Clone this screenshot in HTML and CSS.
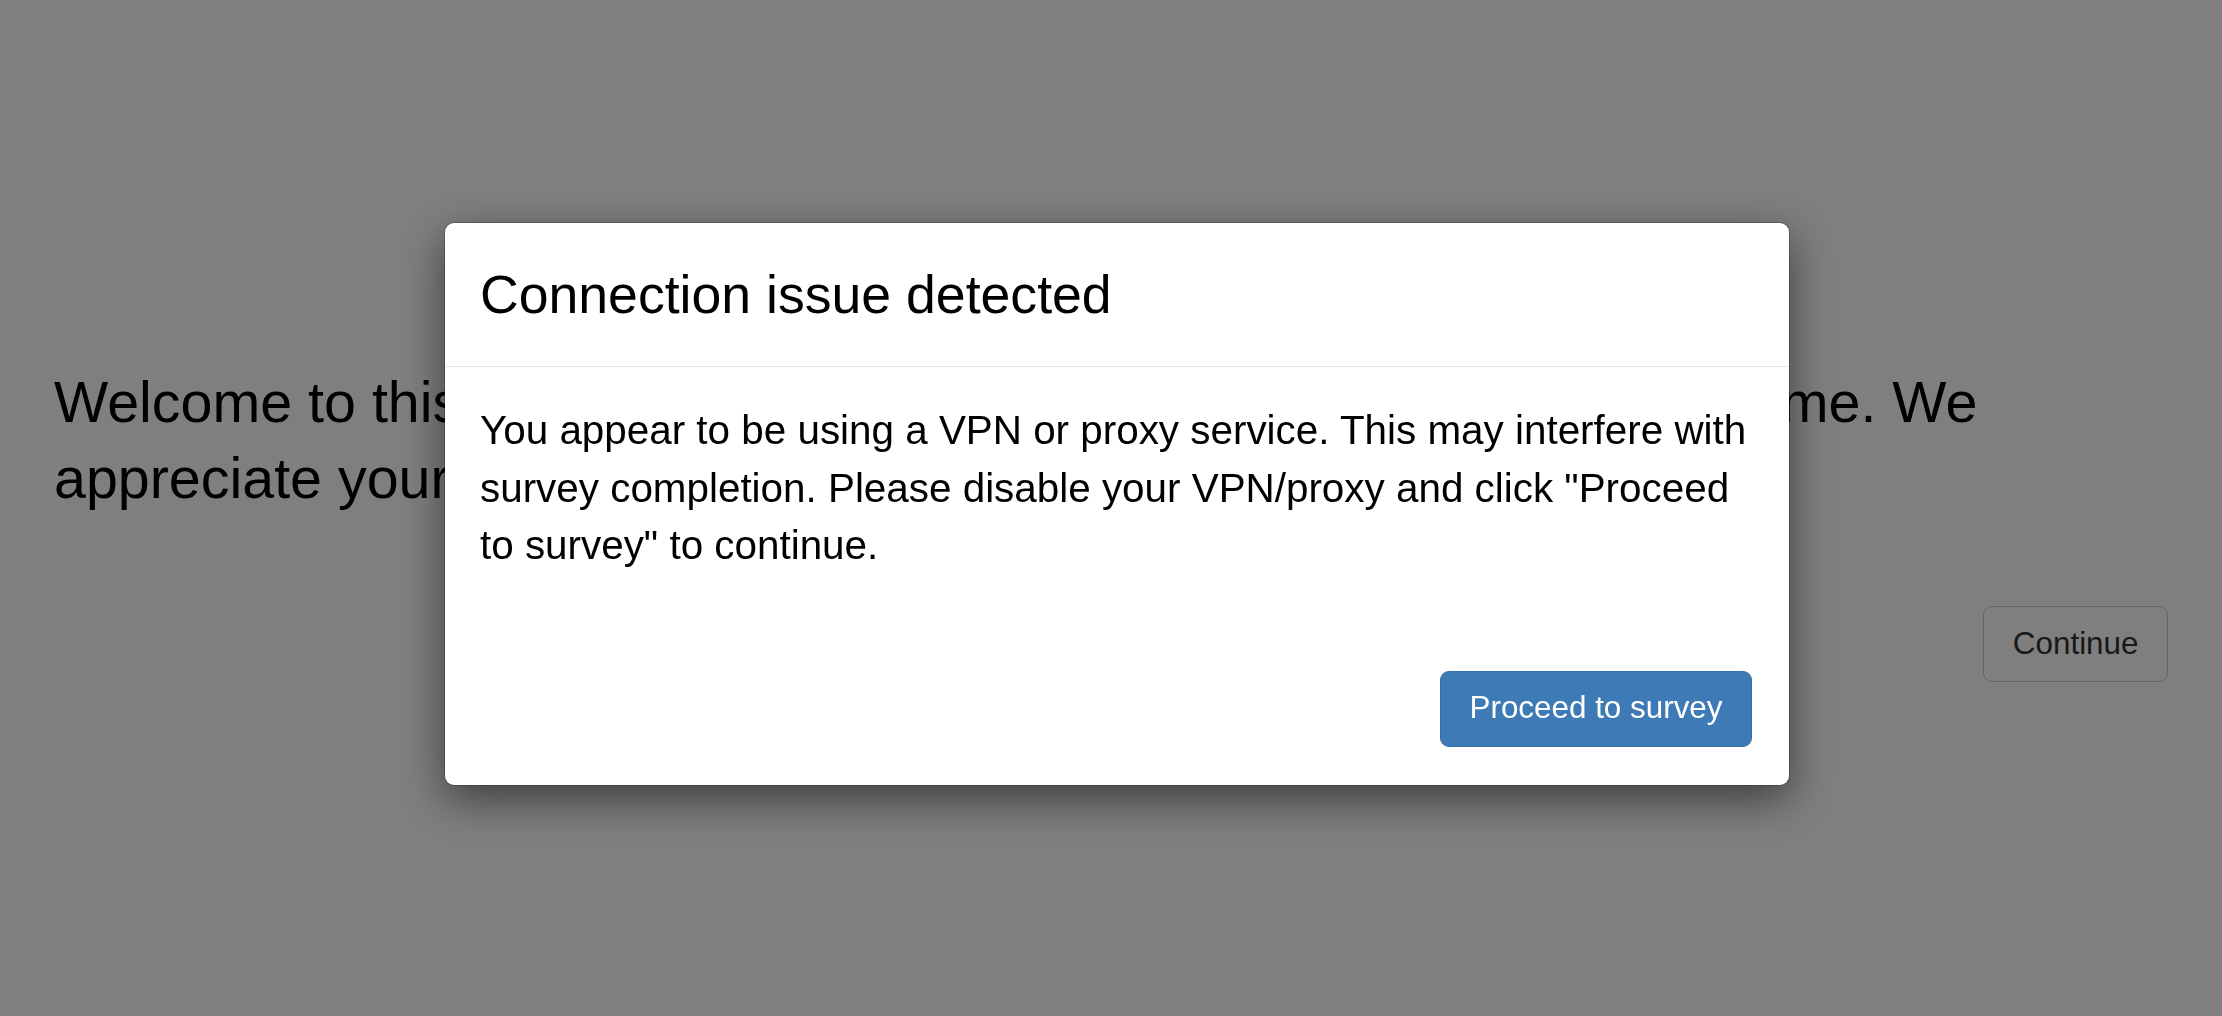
FILE: index.html
```html
<!DOCTYPE html>
<html lang="en">
<head>
<meta charset="utf-8">
<title>Survey</title>
<link rel="stylesheet" href="styles.css">
</head>
<body>
<main class="page">
  <p class="welcome">Welcome to this survey. It takes approximately ten minutes of your time. We appreciate your participation and your honest answers.</p>
  <div class="actions">
    <button class="btn btn-default" type="button">Continue</button>
  </div>
</main>
<div class="backdrop">
  <div class="modal" role="dialog" aria-labelledby="modal-title">
    <div class="modal-header">
      <h4 class="modal-title" id="modal-title">Connection issue detected</h4>
    </div>
    <div class="modal-body">
      <p>You appear to be using a VPN or proxy service. This may interfere with survey completion. Please disable your VPN/proxy and click "Proceed to survey" to continue.</p>
    </div>
    <div class="modal-footer">
      <button class="btn btn-primary" type="button">Proceed to survey</button>
    </div>
  </div>
</div>
</body>
</html>
```
FILE: styles.css
```css
html, body {
  margin: 0;
  padding: 0;
  height: 100%;
}
body {
  background: #ffffff;
  font-family: "Liberation Sans", Arial, sans-serif;
  color: #000;
  overflow: hidden;
}
.page {
  padding: 364px 57px 0 54px;
}
.welcome {
  margin: 0;
  font-size: 57.4px;
  line-height: 76px;
  color: #000;
}
.actions {
  display: flex;
  justify-content: flex-end;
  margin-top: 90px;
}
.btn {
  font-family: "Liberation Sans", Arial, sans-serif;
  font-size: 31.4px;
  line-height: 44.9px;
  padding: 14.5px 28.5px;
  border: 1px solid transparent;
  border-radius: 9px;
  cursor: pointer;
}
.btn-default {
  background: #ffffff;
  color: #333333;
  border-color: #cccccc;
  margin-right: -3px;
}
.btn-primary {
  background: #3e7ab5;
  color: #ffffff;
  border-color: #3570aa;
}
.backdrop {
  position: fixed;
  inset: 0;
  background: rgba(0, 0, 0, 0.5);
  padding: 222px 0 0 444px;
}
.modal {
  width: 1346px;
  box-sizing: border-box;
  background: #ffffff;
  border: 1px solid rgba(0, 0, 0, 0.2);
  border-radius: 10px;
  box-shadow: 0 14px 43px rgba(0, 0, 0, 0.5);
  background-clip: padding-box;
}
.modal-header {
  padding: 35px;
  border-bottom: 1.5px solid #e5e5e5;
}
.modal-title {
  margin: 0;
  font-size: 53.6px;
  font-weight: normal;
  line-height: 73.4px;
  color: #000;
}
.modal-body {
  padding: 35px;
}
.modal-body p {
  margin: 0;
  font-size: 40.4px;
  line-height: 57.1px;
  color: #000;
}
.modal-footer {
  display: flex;
  justify-content: flex-end;
  padding: 62px 37px 38px 35px;
}
```
